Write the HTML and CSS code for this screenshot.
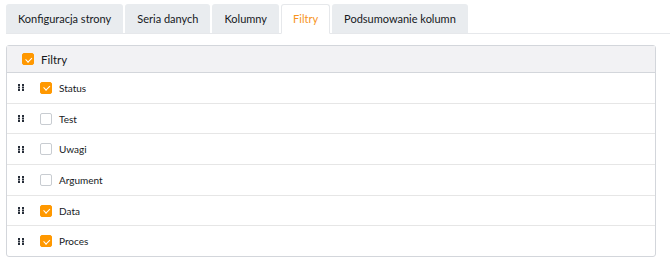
FILE: index.html
```html
<!DOCTYPE html>
<html lang="pl">
<head>
  <meta charset="UTF-8">
  <meta name="viewport" content="width=device-width, initial-scale=1.0">
  <title>Filtry</title>
  <link rel="stylesheet" href="styles.css">
</head>
<body>
  <nav class="tabs">
    <div class="tab">Konfiguracja strony</div>
    <div class="tab">Seria danych</div>
    <div class="tab">Kolumny</div>
    <div class="tab active">Filtry</div>
    <div class="tab">Podsumowanie kolumn</div>
  </nav>

  <div class="panel">
    <div class="panel-header">
      <span class="check on"></span>
      <span class="title">Filtry</span>
    </div>
    <ul class="filter-list">
      <li class="filter-row">
        <svg class="handle" viewBox="0 0 6 7"><path d="M0 0h2v2H0zM4 0h2v2H4zM0 2.5h2v2H0zM4 2.5h2v2H4zM0 5h2v2H0zM4 5h2v2H4z"/></svg>
        <span class="check on"></span><span class="label">Status</span>
      </li>
      <li class="filter-row">
        <svg class="handle" viewBox="0 0 6 7"><path d="M0 0h2v2H0zM4 0h2v2H4zM0 2.5h2v2H0zM4 2.5h2v2H4zM0 5h2v2H0zM4 5h2v2H4z"/></svg>
        <span class="check"></span><span class="label">Test</span>
      </li>
      <li class="filter-row">
        <svg class="handle" viewBox="0 0 6 7"><path d="M0 0h2v2H0zM4 0h2v2H4zM0 2.5h2v2H0zM4 2.5h2v2H4zM0 5h2v2H0zM4 5h2v2H4z"/></svg>
        <span class="check"></span><span class="label">Uwagi</span>
      </li>
      <li class="filter-row">
        <svg class="handle" viewBox="0 0 6 7"><path d="M0 0h2v2H0zM4 0h2v2H4zM0 2.5h2v2H0zM4 2.5h2v2H4zM0 5h2v2H0zM4 5h2v2H4z"/></svg>
        <span class="check"></span><span class="label">Argument</span>
      </li>
      <li class="filter-row">
        <svg class="handle" viewBox="0 0 6 7"><path d="M0 0h2v2H0zM4 0h2v2H4zM0 2.5h2v2H0zM4 2.5h2v2H4zM0 5h2v2H0zM4 5h2v2H4z"/></svg>
        <span class="check on"></span><span class="label">Data</span>
      </li>
      <li class="filter-row">
        <svg class="handle" viewBox="0 0 6 7"><path d="M0 0h2v2H0zM4 0h2v2H4zM0 2.5h2v2H0zM4 2.5h2v2H4zM0 5h2v2H0zM4 5h2v2H4z"/></svg>
        <span class="check on"></span><span class="label">Proces</span>
      </li>
    </ul>
  </div>
</body>
</html>
```

FILE: styles.css
```css
/* Global */
body {
  margin: 0;
  padding: 4px 14px 0 6px;
  font-family: Lato, 'Open Sans', sans-serif;
  font-size: 11px;
  color: #16191d;
  background: #fff;
}

/* Tabs */
.tabs {
  display: flex;
  gap: 2px;
  margin-right: -14px;
  border-bottom: 1px solid #e6e8eb;
}

.tab {
  height: 29px;
  line-height: 29px;
  padding: 0 12px;
  margin-bottom: -1px;
  background: #e9ecef;
  border-radius: 3px 3px 0 0;
  color: #16191d;
}

.tab.active {
  background: #fff;
  border: 1px solid #e6e8eb;
  border-bottom-color: #fff;
  height: 28px;
  line-height: 28px;
  padding: 0 11px;
  color: #f7941d;
}

/* Panel */
.panel {
  margin-top: 11px;
  border: 1px solid #d3d6db;
  border-radius: 3px;
}

.panel-header {
  display: flex;
  align-items: center;
  height: 26px;
  padding-left: 15px;
  background: #f2f2f4;
  border-bottom: 1px solid #d3d6db;
  font-size: 11.5px;
}

.panel-header .title {
  margin-left: 7px;
}

.filter-list {
  list-style: none;
  margin: 0;
  padding: 0;
}

.filter-row {
  display: flex;
  align-items: center;
  height: 29.7px;
  padding-left: 11px;
  border-bottom: 1px solid #e6e6e6;
  font-size: 10px;
}

.filter-row:last-child {
  border-bottom: none;
}

.filter-row .check {
  margin-left: 16px;
}

.filter-row .label {
  margin-left: 7px;
}

/* Drag handle: 2 x 3 dots */
.handle {
  width: 6px;
  height: 7px;
  fill: #262d38;
  flex-shrink: 0;
}

/* Checkbox */
.check {
  position: relative;
  box-sizing: border-box;
  width: 12px;
  height: 12px;
  border: 1px solid #c8ccd1;
  border-radius: 2px;
  background: #fff;
  flex-shrink: 0;
}

.check.on {
  background: #ff9800;
  border-color: #ff9800;
}

.check.on::after {
  content: '';
  position: absolute;
  left: 3.5px;
  top: 1.5px;
  width: 2.5px;
  height: 4.5px;
  border: solid #fff;
  border-width: 0 1.3px 1.3px 0;
  transform: rotate(45deg);
}
```
